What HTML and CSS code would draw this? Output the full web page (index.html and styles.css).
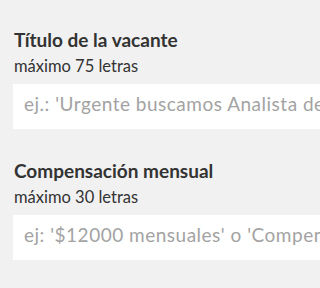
FILE: index.html
```html
<!DOCTYPE html>
<html lang="es">
<head>
<meta charset="utf-8">
<link rel="stylesheet" href="styles.css">
</head>
<body>
<form class="form">
  <div class="field">
    <label class="label" for="titulo">Título de la vacante</label>
    <p class="hint">máximo 75 letras</p>
    <input class="input" id="titulo" type="text" placeholder="ej.: 'Urgente buscamos Analista de Sistemas'">
  </div>
  <div class="field">
    <label class="label" for="comp">Compensación mensual</label>
    <p class="hint">máximo 30 letras</p>
    <input class="input" id="comp" type="text" placeholder="ej: '$12000 mensuales' o 'Compensación competitiva'">
  </div>
</form>
</body>
</html>
```
FILE: styles.css
```css
html, body {
  margin: 0;
  padding: 0;
  overflow: hidden;
  background: #f1f1f1;
}
body {
  font-family: Lato, "Liberation Sans", sans-serif;
  color: #333333;
}
.form {
  display: flex;
  flex-direction: column;
  gap: 30px;
  padding: 28px 0 0 13px;
}
.field {
  display: flex;
  flex-direction: column;
}
.label {
  font-size: 19px;
  font-weight: 700;
  line-height: 23px;
  margin: 0 0 6px 1px;
}
.hint {
  font-size: 16.5px;
  line-height: 19px;
  margin: 0 0 8px 1px;
}
.input {
  box-sizing: border-box;
  height: 45px;
  width: 100%;
  border: 0;
  border-radius: 0;
  background: #ffffff;
  padding: 0 0 7px 11px;
  margin: 0;
  font-family: Lato, "Liberation Sans", sans-serif;
  font-size: 19px;
  letter-spacing: 0.5px;
  color: #333333;
  outline: none;
}
.input::placeholder {
  color: #a3a3a3;
  opacity: 1;
}
```
